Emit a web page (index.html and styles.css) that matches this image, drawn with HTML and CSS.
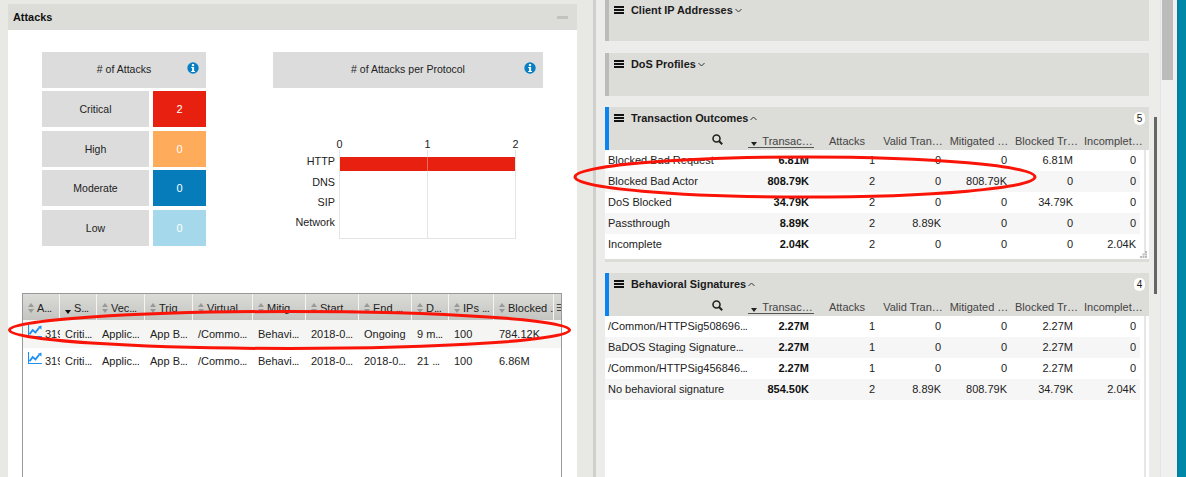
FILE: index.html
```html
<!DOCTYPE html>
<html lang="en">
<head>
    <meta charset="UTF-8">
    <title>Attacks</title>
    <link rel="stylesheet" href="styles.css">
</head>
<body>
    <!-- icons used more than once -->
    <svg class="defs" width="0" height="0">
        <symbol id="i-info" viewBox="0 0 12 12">
            <circle cx="6" cy="6" r="5.7" fill="#077fc4"/>
            <rect x="4.9" y="2.1" width="2.2" height="2" fill="#fff"/>
            <path d="M4.2 5h2.9v3.9h.9v1H4.2v-1h.9V6h-.9z" fill="#fff"/>
        </symbol>
        <symbol id="i-menu" viewBox="0 0 10 8">
            <path d="M0 0h10v2H0zM0 3h10v2H0zM0 6h10v2H0z" fill="#111"/>
        </symbol>
        <symbol id="i-down" viewBox="0 0 7 5">
            <path d="M.5 1l3 3 3-3" fill="none" stroke="#333" stroke-width="1"/>
        </symbol>
        <symbol id="i-up" viewBox="0 0 7 5">
            <path d="M.5 4l3-3 3 3" fill="none" stroke="#333" stroke-width="1"/>
        </symbol>
        <symbol id="i-search" viewBox="0 0 11 11">
            <circle cx="4.5" cy="4.5" r="3.5" fill="none" stroke="#222" stroke-width="1.6"/>
            <path d="M7 7l3.2 3.2" stroke="#222" stroke-width="2"/>
        </symbol>
        <symbol id="i-trend" viewBox="0 0 15 13">
            <path d="M.5 0v12.5H15" fill="none" stroke="#1e90f0" stroke-width="1.2"/>
            <path d="M1.5 10L5 5.5l3 2.5 4-5" fill="none" stroke="#1e90f0" stroke-width="2"/>
            <path d="M10.5 2L14.5 .5v4.5z" fill="#1e90f0"/>
        </symbol>
    </svg>

    <div class="left-pane">
        <div class="panel">
            <div class="panel-head">
                <span>Attacks</span>
                <span class="minimize"></span>
            </div>
            <div class="panel-body">
                <div class="stats-row">
                    <div class="stats">
                        <div class="card-head">
                            # of Attacks
                            <svg class="info"><use href="#i-info"/></svg>
                        </div>
                        <div class="stat-row">
                            <div class="stat-label">Critical</div>
                            <div class="stat-value critical">2</div>
                        </div>
                        <div class="stat-row">
                            <div class="stat-label">High</div>
                            <div class="stat-value high">0</div>
                        </div>
                        <div class="stat-row">
                            <div class="stat-label">Moderate</div>
                            <div class="stat-value moderate">0</div>
                        </div>
                        <div class="stat-row">
                            <div class="stat-label">Low</div>
                            <div class="stat-value low">0</div>
                        </div>
                    </div>
                    <div class="protocols">
                        <div class="card-head">
                            # of Attacks per Protocol
                            <svg class="info"><use href="#i-info"/></svg>
                        </div>
                        <svg class="chart" width="270" height="110" viewBox="0 0 270 110">
                            <rect x="67" y="27" width="175" height="14" fill="#e82010"/>
                            <path d="M66.5 20v88.5M154.5 20v88.5M242.5 20v88.5M66 108.5h177" fill="none" stroke="#e4e4e4"/>
                            <path d="M154.5 27v14" stroke="#ee6a5c"/>
                            <g class="ticks">
                                <text x="66.5" y="18">0</text>
                                <text x="154.5" y="18">1</text>
                                <text x="242.5" y="18">2</text>
                            </g>
                            <g class="names">
                                <text x="62" y="35">HTTP</text>
                                <text x="62" y="56">DNS</text>
                                <text x="62" y="76">SIP</text>
                                <text x="62" y="96">Network</text>
                            </g>
                        </svg>
                    </div>
                </div>

                <div class="attack-table">
                    <div class="grid-row table-head">
                        <div class="th"><i class="sort"></i>A<span class="more">...</span></div>
                        <div class="th"><i class="sort sorted"></i>S<span class="more">...</span></div>
                        <div class="th"><i class="sort"></i>Vec<span class="more">...</span></div>
                        <div class="th"><i class="sort"></i>Trig</div>
                        <div class="th"><i class="sort"></i>Virtual <span class="more">...</span></div>
                        <div class="th"><i class="sort"></i>Mitig<span class="more">...</span></div>
                        <div class="th"><i class="sort"></i>Start <span class="more">...</span></div>
                        <div class="th"><i class="sort"></i>End <span class="more">...</span></div>
                        <div class="th"><i class="sort"></i>D<span class="more">...</span></div>
                        <div class="th"><i class="sort"></i>IPs <span class="more">...</span></div>
                        <div class="th"><i class="sort"></i>Blocked <span class="more">..</span></div>
                        <div class="th th-menu">☰</div>
                    </div>
                    <div class="grid-row table-row striped">
                        <div class="td td-id"><svg class="trend"><use href="#i-trend"/></svg>319</div>
                        <div class="td">Criti<span class="more">...</span></div>
                        <div class="td">Applic<span class="more">...</span></div>
                        <div class="td">App B<span class="more">...</span></div>
                        <div class="td">/Commo<span class="more">...</span></div>
                        <div class="td">Behavi<span class="more">...</span></div>
                        <div class="td">2018-0<span class="more">...</span></div>
                        <div class="td">Ongoing</div>
                        <div class="td">9 m<span class="more">...</span></div>
                        <div class="td">100</div>
                        <div class="td">784.12K</div>
                    </div>
                    <div class="grid-row table-row">
                        <div class="td td-id"><svg class="trend"><use href="#i-trend"/></svg>319</div>
                        <div class="td">Criti<span class="more">...</span></div>
                        <div class="td">Applic<span class="more">...</span></div>
                        <div class="td">App B<span class="more">...</span></div>
                        <div class="td">/Commo<span class="more">...</span></div>
                        <div class="td">Behavi<span class="more">...</span></div>
                        <div class="td">2018-0<span class="more">...</span></div>
                        <div class="td">2018-0<span class="more">...</span></div>
                        <div class="td">21 <span class="more">...</span></div>
                        <div class="td">100</div>
                        <div class="td">6.86M</div>
                    </div>
                </div>
            </div>
        </div>
    </div>

    <div class="splitter"></div>

    <div class="right-pane">
        <div class="widgets">
            <div class="widget widget-first">
                <div class="widget-head">
                    <div class="widget-title">
                        <svg class="menu"><use href="#i-menu"/></svg>
                        Client IP Addresses
                        <svg class="chevron"><use href="#i-down"/></svg>
                    </div>
                </div>
            </div>
            <div class="widget">
                <div class="widget-head">
                    <div class="widget-title">
                        <svg class="menu"><use href="#i-menu"/></svg>
                        DoS Profiles
                        <svg class="chevron"><use href="#i-down"/></svg>
                    </div>
                </div>
            </div>

            <div class="widget open">
                <div class="widget-head">
                    <div class="widget-title">
                        <svg class="menu"><use href="#i-menu"/></svg>
                        Transaction Outcomes
                        <svg class="chevron"><use href="#i-up"/></svg>
                        <span class="badge">5</span>
                    </div>
                    <div class="cols">
                        <div class="col-search"><svg class="search"><use href="#i-search"/></svg></div>
                        <div class="col col-sorted"><i class="caret"></i>Transac…</div>
                        <div class="col">Attacks</div>
                        <div class="col">Valid Tran…</div>
                        <div class="col">Mitigated …</div>
                        <div class="col col-blocked">Blocked Tr…</div>
                        <div class="col">Incomplet…</div>
                    </div>
                </div>
                <div class="widget-body">
                    <div class="rows">
                        <div class="cols row"><div class="name">Blocked Bad Request</div><b>6.81M</b><div>1</div><div>0</div><div>0</div><div>6.81M</div><div>0</div></div>
                        <div class="cols row"><div class="name">Blocked Bad Actor</div><b>808.79K</b><div>2</div><div>0</div><div>808.79K</div><div>0</div><div>0</div></div>
                        <div class="cols row"><div class="name">DoS Blocked</div><b>34.79K</b><div>2</div><div>0</div><div>0</div><div>34.79K</div><div>0</div></div>
                        <div class="cols row"><div class="name">Passthrough</div><b>8.89K</b><div>2</div><div>8.89K</div><div>0</div><div>0</div><div>0</div></div>
                        <div class="cols row"><div class="name">Incomplete</div><b>2.04K</b><div>2</div><div>0</div><div>0</div><div>0</div><div>2.04K</div></div>
                    </div>
                    <div class="rail"></div>
                    <svg class="grip" width="7" height="7" viewBox="0 0 7 7">
                        <path d="M5 0h2v2H5zM2.500 2.500h2v2h-2zM5 2.500h2v2H5zM0 5h2v2H0zM2.500 5h2v2h-2zM5 5h2v2H5z" fill="#bbb"/>
                    </svg>
                </div>
            </div>

            <div class="widget open last">
                <div class="widget-head">
                    <div class="widget-title">
                        <svg class="menu"><use href="#i-menu"/></svg>
                        Behavioral Signatures
                        <svg class="chevron"><use href="#i-up"/></svg>
                        <span class="badge">4</span>
                    </div>
                    <div class="cols">
                        <div class="col-search"><svg class="search"><use href="#i-search"/></svg></div>
                        <div class="col col-sorted"><i class="caret"></i>Transac…</div>
                        <div class="col">Attacks</div>
                        <div class="col">Valid Tran…</div>
                        <div class="col">Mitigated …</div>
                        <div class="col col-blocked">Blocked Tr…</div>
                        <div class="col">Incomplet…</div>
                    </div>
                </div>
                <div class="widget-body">
                    <div class="rows">
                        <div class="cols row"><div class="name">/Common/HTTPSig508696<span class="more">...</span></div><b>2.27M</b><div>1</div><div>0</div><div>0</div><div>2.27M</div><div>0</div></div>
                        <div class="cols row"><div class="name">BaDOS Staging Signature<span class="more">...</span></div><b>2.27M</b><div>1</div><div>0</div><div>0</div><div>2.27M</div><div>0</div></div>
                        <div class="cols row"><div class="name">/Common/HTTPSig456846<span class="more">...</span></div><b>2.27M</b><div>1</div><div>0</div><div>0</div><div>2.27M</div><div>0</div></div>
                        <div class="cols row"><div class="name">No behavioral signature</div><b>854.50K</b><div>2</div><div>8.89K</div><div>808.79K</div><div>34.79K</div><div>2.04K</div></div>
                    </div>
                    <div class="rail"></div>
                </div>
            </div>
        </div>

        <div class="inner-track"><div class="inner-thumb"></div></div>
        <div class="outer-track"><div class="outer-thumb"></div></div>
        <div class="edge"></div>
    </div>

    <!-- hand drawn highlights on top of the screenshot -->
    <svg class="marks" width="1186" height="477">
        <ellipse cx="289.500" cy="330" rx="280" ry="18.500"/>
        <ellipse cx="805" cy="177" rx="230" ry="20"/>
    </svg>
</body>
</html>
```

FILE: styles.css
```css
* {
    box-sizing: border-box;
}

body {
    margin: 0;
    height: 100vh;
    display: flex;
    overflow: hidden;
    font-family: 'Liberation Sans', Arial, sans-serif;
    font-size: 11px;
    color: #222;
    background: #e8e8e4;
}

.defs {
    position: absolute;
}

.more {
    letter-spacing: -0.7px;
}

/* left side */
.left-pane {
    width: 593px;
    flex: none;
    padding: 4px 16px 0 8px;
}

.panel {
    height: 100%;
    display: flex;
    flex-direction: column;
    background: #fff;
}

.panel-head {
    height: 26px;
    flex: none;
    display: flex;
    align-items: center;
    justify-content: space-between;
    padding: 0 9px 0 5px;
    background: #dcdcd8;
    font-size: 10.9px;
    font-weight: bold;
    color: #111;
}

.minimize {
    width: 11px;
    height: 3px;
    background: #c2c2be;
}

.panel-body {
    flex: 1;
    min-height: 0;
    padding: 22px 0 0 14px;
    display: flex;
    flex-direction: column;
}

.stats-row {
    display: flex;
    gap: 67px;
    padding-left: 20px;
    font-size: 10.5px;
}

.stats {
    width: 164px;
    display: flex;
    flex-direction: column;
    gap: 3.4px;
}

.protocols {
    width: 270px;
}

.card-head {
    position: relative;
    height: 36px;
    padding-bottom: 2px;
    display: flex;
    align-items: center;
    justify-content: center;
    background: #dcdcdc;
}

.info {
    position: absolute;
    right: 7px;
    top: 10px;
    width: 12px;
    height: 12px;
}

.stat-row {
    display: flex;
    gap: 4px;
    height: 36px;
}

.stat-label {
    width: 107px;
    display: flex;
    align-items: center;
    justify-content: center;
    background: #dcdcdc;
}

.stat-value {
    flex: 1;
    display: flex;
    align-items: center;
    justify-content: center;
    color: #fff;
    font-size: 11px;
}

.critical { background: #e82010; }
.high { background: #ffab5c; }
.moderate { background: #067dba; }
.low { background: #a5d8ea; }

.chart {
    display: block;
    margin-top: 42px;
}

.chart text {
    font-size: 10.8px;
    fill: #222;
}

.ticks text {
    text-anchor: middle;
}

.names text {
    text-anchor: end;
}

/* attack list */
.attack-table {
    flex: 1;
    width: 540px;
    margin-top: 47px;
    border: 1px solid #999;
    border-bottom: none;
}

.grid-row {
    display: grid;
    grid-template-columns: 37px 37px 48px 48px 60px 53px 53px 53px 37px 45px 60px 7px;
}

.table-head {
    height: 27px;
}

.th {
    padding-left: 5px;
    line-height: 28px;
    overflow: hidden;
    white-space: nowrap;
    background: linear-gradient(#dbdbd7, #c4c4c0);
    border-right: 1px solid #f4f4f2;
    border-bottom: 1px solid #f4f4f2;
}

.th-menu {
    padding-left: 2px;
    border-right: none;
    color: #444;
    font-size: 10px;
}

.sort {
    position: relative;
    display: inline-block;
    width: 6px;
    height: 10px;
    margin-right: 3px;
    vertical-align: -1px;
}

.sort::before,
.sort::after {
    content: "";
    position: absolute;
    left: 0;
    border-left: 3px solid transparent;
    border-right: 3px solid transparent;
}

.sort::before {
    top: 0;
    border-bottom: 4px solid #999;
}

.sort::after {
    bottom: 0;
    border-top: 4px solid #999;
}

.sorted::before {
    display: none;
}

.sorted::after {
    bottom: -1px;
    border-top-color: #111;
}

.table-row {
    height: 27px;
}

.striped {
    background: #f5f5f3;
}

.td {
    padding: 7px 0 0 5px;
    white-space: nowrap;
    overflow: hidden;
}

.td-id {
    display: flex;
    align-items: flex-start;
    gap: 3px;
}

.trend {
    flex: none;
    width: 14px;
    height: 12px;
    margin-top: -3px;
}

.splitter {
    width: 3px;
    flex: none;
    background: #cfcfcb;
}

/* right side */
.right-pane {
    flex: 1;
    display: flex;
    background: #ecedea;
}

.widgets {
    width: 553px;
    flex: none;
    padding-left: 9px;
    display: flex;
    flex-direction: column;
}

.widget {
    flex: none;
    margin-bottom: 11px;
}

.widget-first {
    margin-top: -1px;
    margin-bottom: 12px;
}

.widget-first .widget-head {
    height: 42px;
}

.widget-head {
    height: 43px;
    border-left: 4px solid #bbbcb8;
    background: #dcdcd8;
}

.open .widget-head {
    border-left-color: #0a84f0;
}

.widget-title {
    height: 22px;
    display: flex;
    align-items: center;
    padding-left: 5px;
    font-size: 10.9px;
    font-weight: bold;
    color: #1a1a1a;
}

.menu {
    width: 10px;
    height: 8px;
    margin-right: 7px;
}

.chevron {
    width: 7px;
    height: 5px;
    margin-left: 2px;
}

.badge {
    width: 11px;
    height: 13px;
    margin-left: auto;
    margin-right: 4px;
    display: flex;
    align-items: center;
    justify-content: center;
    background: #fff;
    border-radius: 5px;
    font-size: 10px;
    font-weight: normal;
}

.cols {
    display: grid;
    grid-template-columns: 143px repeat(5, 66px) 62px;
}

.widget-head .cols {
    height: 21px;
    margin-left: -4px;
}

.col-search {
    padding: 5px 0 0 107px;
}

.search {
    width: 11px;
    height: 11px;
}

.col {
    padding-top: 5px;
    line-height: 15px;
    text-align: center;
    color: #444;
    white-space: nowrap;
}

.col:last-child {
    padding-left: 6px;
    text-align: left;
}

.col-blocked {
    padding-left: 3px;
    text-align: left;
}

.col-sorted {
    height: 19px;
    border-bottom: 1px solid #555;
    overflow: hidden;
}

.caret {
    display: inline-block;
    margin: 0 5px 0 2px;
    vertical-align: -1px;
    border-left: 3.500px solid transparent;
    border-right: 3.500px solid transparent;
    border-top: 4px solid #222;
}

.widget-body {
    position: relative;
    display: flex;
    padding-bottom: 4px;
    background: #fff;
    border-bottom: 3px solid #dcdcd8;
}

.rows {
    width: 535px;
    flex: none;
}

.row {
    height: 21px;
    padding-bottom: 2px;
    align-items: center;
    text-align: right;
}

.row:nth-child(even) {
    background: #f6f6f6;
}

.row > * {
    padding-right: 5px;
}

.row > :last-child {
    padding-right: 4px;
}

.row .name {
    padding: 0 0 0 3px;
    text-align: left;
    white-space: nowrap;
}

.row b {
    color: #111;
}

.rail {
    width: 2px;
    margin-left: 4px;
    background: #e6e6e6;
}

.grip {
    position: absolute;
    right: 2px;
    bottom: 1px;
}

.last {
    flex: 1;
    min-height: 0;
    margin-bottom: 0;
    display: flex;
    flex-direction: column;
}

.last .widget-body {
    flex: 1;
    padding-bottom: 0;
    border-bottom: none;
}

.inner-track {
    width: 5px;
    margin-left: 5px;
    flex: none;
}

.inner-thumb {
    width: 2.500px;
    height: 177px;
    margin-top: 117px;
    background: #666;
}

.outer-track {
    width: 17px;
    margin-left: 1px;
    padding-left: 1px;
    flex: none;
    background: #f0f0f0;
    border-left: 1px solid #e4e4e2;
}

.outer-thumb {
    width: 11px;
    height: 80px;
    background: #bcbcbc;
}

.edge {
    flex: 1;
    background: linear-gradient(90deg, #0b78a2, #0088a8 30%);
}

.marks {
    position: absolute;
    left: 0;
    top: 0;
    pointer-events: none;
}

.marks ellipse {
    fill: none;
    stroke: #fa1408;
    stroke-width: 3;
}
```
